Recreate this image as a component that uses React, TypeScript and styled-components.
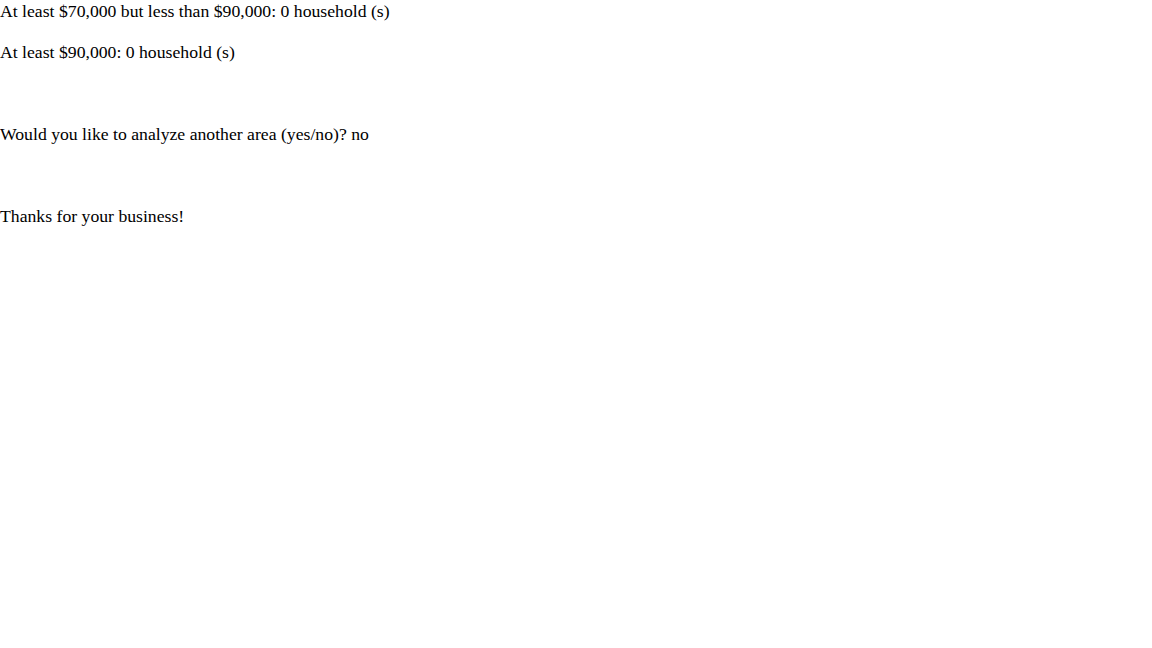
import React from "react";
import styled, { createGlobalStyle } from "styled-components";

const Global = createGlobalStyle`
  html, body { margin: 0; padding: 0; background: #ffffff; }
  body { font-family: "Liberation Serif", "Times New Roman", serif; color: #000000; }
`;

const Output = styled.div`
  display: flex;
  flex-direction: column;
`;

const Line = styled.div`
  height: 41px;
  font-size: 17.7px;
  line-height: 22px;
  white-space: pre;
`;

const lines = [
  "At least $70,000 but less than $90,000: 0 household (s)",
  "At least $90,000: 0 household (s)",
  "",
  "Would you like to analyze another area (yes/no)? no",
  "",
  "Thanks for your business!",
];

export default function App() {
  return (
    <>
      <Global />
      <Output>
        {lines.map((t, i) => (
          <Line key={i}>{t}</Line>
        ))}
      </Output>
    </>
  );
}
